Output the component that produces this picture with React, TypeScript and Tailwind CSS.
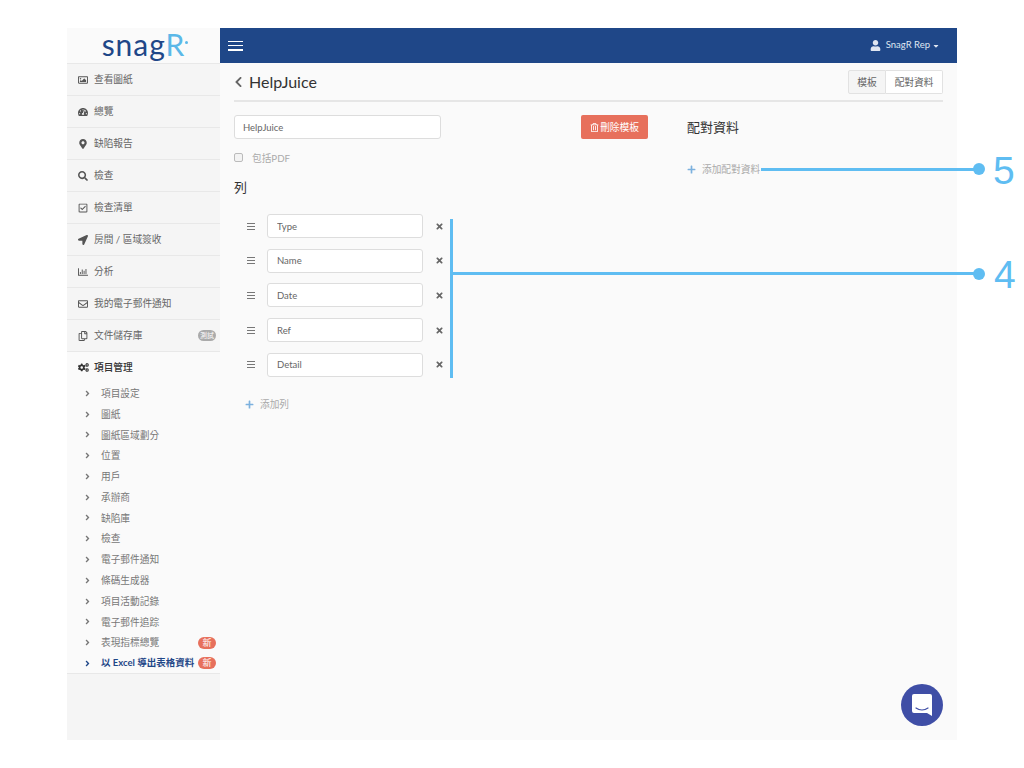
import React from "react";
import {
  FaRegImage, FaTachometerAlt, FaMapMarkerAlt, FaSearch, FaRegCheckSquare, FaLocationArrow,
  FaRegChartBar, FaRegEnvelope, FaRegCopy, FaCogs, FaAngleRight, FaChevronLeft, FaTimes, FaPlus,
  FaUser, FaCaretDown, FaRegTrashAlt,
} from "react-icons/fa";

const font = { fontFamily: 'Lato,"Noto Sans CJK TC",sans-serif' };

const menu: [React.ComponentType<{ className?: string }>, string, string?][] = [
  [FaRegImage, "查看圖紙"],
  [FaTachometerAlt, "總覽"],
  [FaMapMarkerAlt, "缺陷報告"],
  [FaSearch, "檢查"],
  [FaRegCheckSquare, "檢查清單"],
  [FaLocationArrow, "房間 / 區域簽收"],
  [FaRegChartBar, "分析"],
  [FaRegEnvelope, "我的電子郵件通知"],
  [FaRegCopy, "文件儲存庫", "測試"],
];

const sub = ["項目設定", "圖紙", "圖紙區域劃分", "位置", "用戶", "承辦商", "缺陷庫", "檢查", "電子郵件通知", "條碼生成器", "項目活動記錄", "電子郵件追踪", "表現指標總覽"];
const cols = ["Type", "Name", "Date", "Ref", "Detail"];

function Burger({ className, bar }: { className: string; bar: string }) {
  return (
    <div className={"flex flex-col justify-between " + className}>
      <span className={"block bg-current " + bar} />
      <span className={"block bg-current " + bar} />
      <span className={"block bg-current " + bar} />
    </div>
  );
}

export default function App() {
  return (
    <div className="relative w-[1024px] h-[768px] bg-white overflow-hidden pt-[28px] pl-[67px]" style={font}>
      <div className="flex w-[890px] h-[712px]">
        <aside className="w-[153px] shrink-0 bg-[#f5f5f5] flex flex-col">
          <div className="h-[36px] bg-[#fafafa] border-b border-[#e8e8e8] flex items-center justify-center">
            <span className="relative text-[30px] leading-none tracking-[1px] pb-1 text-[#1f4788]" style={{ fontFamily: "Lato, sans-serif" }}>
              snag<span className="text-[#5bb8e8]">R</span>
              <span className="absolute right-[-3px] top-[12px] w-[3px] h-[3px] rounded-full bg-[#5bb8e8]" />
            </span>
          </div>
          {menu.map(([Icon, label, badge]) => (
            <div key={label} className="h-[32px] border-b border-[#e8e8e8] flex items-center pl-[11px] pr-[4px] text-[9.7px] text-[#666] whitespace-nowrap">
              <Icon className="w-[10px] h-[10px] text-[#555] shrink-0" />
              <span className="ml-[6px] flex-1">{label}</span>
              {badge && <span className="h-[11px] w-[18px] rounded-full bg-[#aaa] text-white text-[7px] leading-[11px] text-center">{badge}</span>}
            </div>
          ))}
          <div className="bg-[#fafafa] border-b border-[#e8e8e8] h-[322px]">
            <div className="h-[31px] flex items-center pl-[11px] text-[9.7px] text-[#333] font-medium">
              <FaCogs className="w-[11px] h-[11px] shrink-0" />
              <span className="ml-[5px]">項目管理</span>
            </div>
            <div className="flex flex-col">
              {sub.map((s) => (
                <div key={s} className="h-[20.77px] flex items-center pl-[17px] pr-[4px] text-[9.7px] text-[#777] whitespace-nowrap">
                  <FaAngleRight className="w-[7px] h-[9px] text-[#777] shrink-0" />
                  <span className="ml-[10px] flex-1">{s}</span>
                  {s === "表現指標總覽" && <span className="h-[12px] w-[18px] rounded-full bg-[#e7705c] text-white text-[9px] leading-[12px] text-center">新</span>}
                </div>
              ))}
              <div className="h-[20.77px] flex items-center pl-[17px] pr-[4px] text-[9.5px] text-[#1f4788] font-bold whitespace-nowrap">
                <FaAngleRight className="w-[7px] h-[9px] shrink-0" />
                <span className="ml-[10px] flex-1">以 Excel 導出表格資料</span>
                <span className="h-[12px] w-[18px] rounded-full bg-[#e7705c] text-white text-[9px] leading-[12px] text-center font-normal">新</span>
              </div>
            </div>
          </div>
        </aside>

        <main className="flex-1 flex flex-col bg-[#fafafa] relative">
          <header className="h-[35px] bg-[#1f4788] flex items-center justify-between pl-[8px] pr-[17px] text-[#dfe6f1]">
            <Burger className="w-[15px] h-[10px] text-white" bar="h-[1.5px]" />
            <div className="flex items-center text-[9.5px]">
              <FaUser className="w-[11px] h-[11px]" />
              <span className="ml-[5px]">SnagR Rep</span>
              <FaCaretDown className="ml-[2px] w-[8px] h-[8px]" />
            </div>
          </header>

          <div className="px-[14px] flex-1">
            <div className="h-[39px] border-b-2 border-[#e6e6e6] flex items-center justify-between">
              <div className="flex items-center text-[#333]">
                <FaChevronLeft className="w-[9px] h-[12px] text-[#666]" />
                <span className="ml-[6px] text-[16px] leading-none">HelpJuice</span>
              </div>
              <div className="flex text-[9.7px] text-[#666] mt-[1px]">
                <span className="h-[24px] w-[38px] flex items-center justify-center bg-[#f5f5f5] border border-[#e2e2e2] rounded-l-[2px]">模板</span>
                <span className="h-[24px] w-[57px] flex items-center justify-center bg-white border border-l-0 border-[#e2e2e2] rounded-r-[2px]">配對資料</span>
              </div>
            </div>

            <div className="flex mt-[13px]">
              <div className="w-[414px]">
                <div className="flex items-start justify-between">
                  <input readOnly value="HelpJuice" className="w-[207px] h-[24px] bg-white border border-[#ddd] rounded-[3px] px-[8px] text-[9.5px] text-[#666] outline-none" />
                  <button className="w-[67px] h-[24px] bg-[#e7705c] rounded-[2px] text-white text-[9.7px] flex items-center justify-center">
                    <FaRegTrashAlt className="w-[9px] h-[9px] mr-[1px]" />刪除模板
                  </button>
                </div>
                <div className="flex items-center mt-[12px] h-[14px] text-[9.7px] text-[#aaa]">
                  <span className="w-[9px] h-[9px] border border-[#bbb] bg-[#f3f3f3] rounded-[2px] mb-[2px]" />
                  <span className="ml-[9px]">包括PDF</span>
                </div>
                <div className="mt-[13px] text-[13px] leading-[18px] text-[#333]">列</div>
                <div className="mt-[18px] flex flex-col gap-[10.7px] w-[214px]">
                  {cols.map((c) => (
                    <div key={c} className="flex items-center h-[24px]">
                      <Burger className="ml-[13px] w-[8px] h-[7px] text-[#777] shrink-0" bar="h-px" />
                      <input readOnly value={c} className="ml-[12px] w-[156px] h-[24px] shrink-0 bg-white border border-[#ddd] rounded-[3px] px-[9px] text-[9.5px] text-[#666] outline-none" />
                      <FaTimes className="ml-[12px] w-[9px] h-[9px] text-[#666] shrink-0" />
                    </div>
                  ))}
                </div>
                <div className="mt-[20px] ml-[11px] flex items-center text-[9.7px] text-[#aaa]">
                  <FaPlus className="w-[9px] h-[9px] text-[#7cb1de]" />
                  <span className="ml-[6px]">添加列</span>
                </div>
              </div>
              <div className="ml-[39px]">
                <div className="text-[13px] leading-[24px] text-[#333]">配對資料</div>
                <div className="mt-[23px] flex items-center text-[9.7px] text-[#aaa]">
                  <FaPlus className="w-[9px] h-[9px] text-[#7cb1de]" />
                  <span className="ml-[6px]">添加配對資料</span>
                </div>
              </div>
            </div>
          </div>
        </main>
      </div>

      {/* annotations */}
      <div className="absolute left-[761px] top-[168px] w-[218px] h-[3px] bg-[#5fbdf2]" />
      <div className="absolute left-[973px] top-[163px] w-[12px] h-[12px] rounded-full bg-[#5fbdf2]" />
      <div className="absolute left-[993px] top-[149px] text-[39px] leading-[44px] text-[#5fbdf2]" style={{ fontFamily: '"Liberation Sans",sans-serif' }}>5</div>
      <div className="absolute left-[450px] top-[219px] w-[3px] h-[159px] bg-[#5fbdf2]" />
      <div className="absolute left-[452px] top-[272px] w-[526px] h-[3px] bg-[#5fbdf2]" />
      <div className="absolute left-[973px] top-[268px] w-[12px] h-[12px] rounded-full bg-[#5fbdf2]" />
      <div className="absolute left-[994px] top-[253px] text-[39px] leading-[44px] text-[#5fbdf2]" style={{ fontFamily: '"Liberation Sans",sans-serif' }}>4</div>

      {/* chat launcher */}
      <div className="absolute left-[901px] top-[684px] w-[42px] h-[42px] rounded-full bg-[#3f4ea6] flex items-center justify-center">
        <svg width="22" height="24" viewBox="0 0 22 24">
          <path d="M3 1h16a2 2 0 0 1 2 2v20l-5-3H3a2 2 0 0 1-2-2V3a2 2 0 0 1 2-2z" fill="#fff" />
          <path d="M5 15c3.500 2.400 8.500 2.400 12 0" stroke="#3f4ea6" strokeWidth="1.200" fill="none" strokeLinecap="round" />
        </svg>
      </div>
    </div>
  );
}
